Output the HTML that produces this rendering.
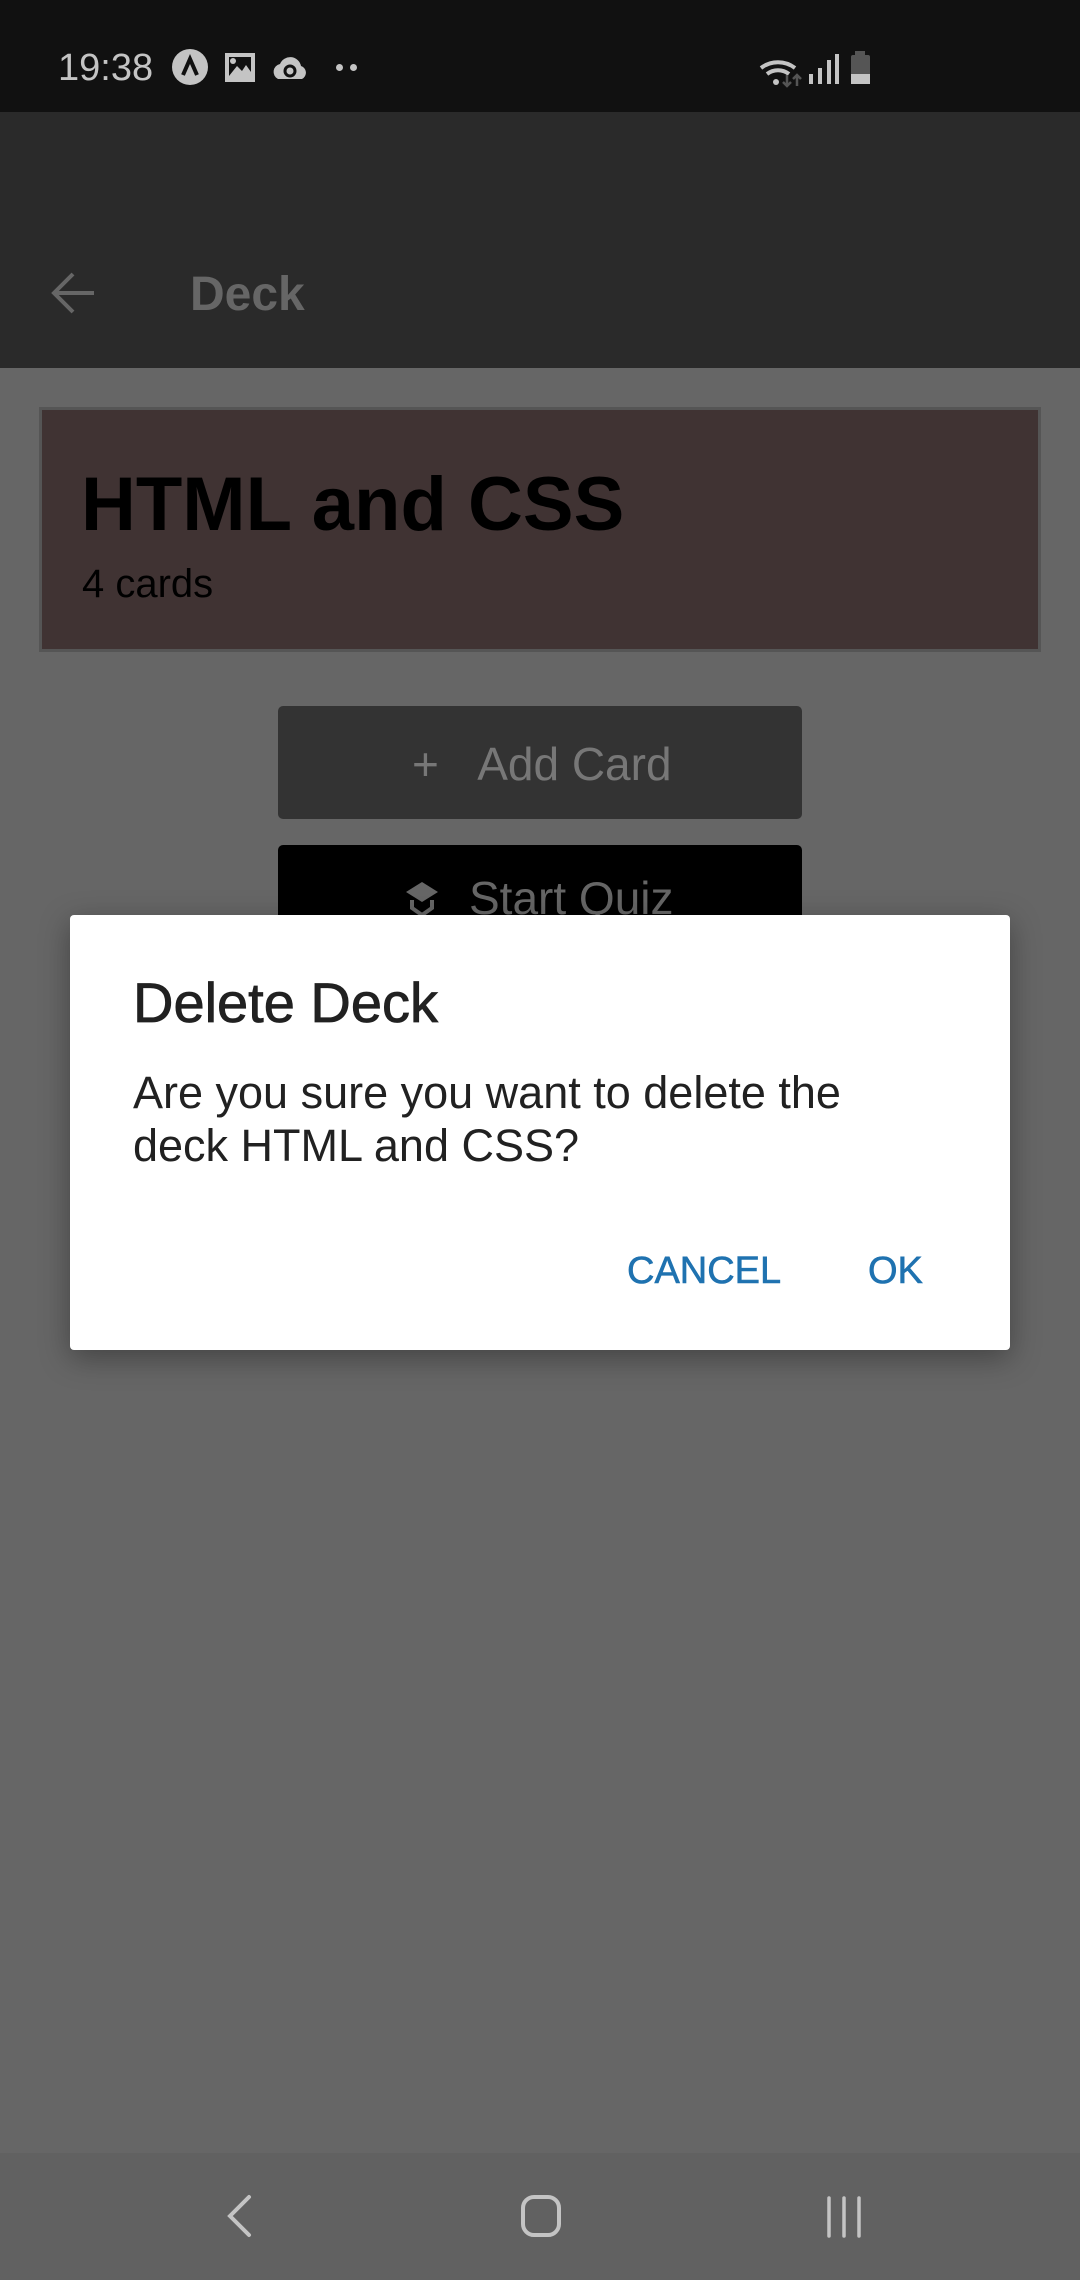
<!DOCTYPE html>
<html><head><meta charset="utf-8"><style>
*{margin:0;padding:0;box-sizing:border-box}
body{width:1080px;height:2280px;background:#666;position:relative;overflow:hidden;font-family:"Liberation Sans",Roboto,sans-serif}
.a{position:absolute}
</style></head><body>
<div class="a" style="left:0;top:0;width:1080px;height:112px;background:#111"></div>
<div class="a" style="left:58px;top:46px;font-size:38px;color:#c4c4c4;line-height:44px">19:38</div>
<svg class="a" style="left:168px;top:46px" width="150" height="42" viewBox="168 46 150 42">
<circle cx="190" cy="67" r="18" fill="#c4c4c4"/><path d="M183 75 L190 59 L197 75" stroke="#111" stroke-width="4" fill="none"/>
<rect x="225" y="53" width="30" height="29" fill="#c4c4c4"/><rect x="229" y="57" width="22" height="19" fill="#111"/>
<circle cx="233" cy="61" r="3" fill="#c4c4c4"/><path d="M229 76 L237 66 L242 71 L246 65 L251 72 L251 76Z" fill="#c4c4c4"/>
<path d="M278 79 a8 8 0 0 1 2-15 a11 11 0 0 1 21 2 a7 7 0 0 1 1 13Z" fill="#c4c4c4"/>
<circle cx="290" cy="71" r="5" stroke="#111" stroke-width="3" fill="none"/>
</svg>
<div class="a" style="left:336px;top:64px;width:7px;height:7px;border-radius:50%;background:#c4c4c4"></div>
<div class="a" style="left:350px;top:64px;width:7px;height:7px;border-radius:50%;background:#c4c4c4"></div>
<svg class="a" style="left:755px;top:48px" width="120" height="40" viewBox="755 48 120 40">
<path d="M761 68 a28 28 0 0 1 34 0" stroke="#c4c4c4" stroke-width="4" fill="none"/>
<path d="M767 74 a18 18 0 0 1 22 0" stroke="#c4c4c4" stroke-width="4" fill="none"/>
<circle cx="776" cy="82" r="3" fill="#c4c4c4"/>
<path d="M787 75v10M783 82l4 4 4-4M797 86v-10M793 79l4-4 4 4" stroke="#555" stroke-width="2.5" fill="none"/>
<rect x="809" y="74" width="4" height="10" fill="#c4c4c4"/><rect x="818" y="68" width="4" height="16" fill="#c4c4c4"/>
<rect x="827" y="60" width="4" height="24" fill="#c4c4c4"/><rect x="835" y="54" width="4" height="30" fill="#c4c4c4"/>
<rect x="855" y="51" width="10" height="4" fill="#555"/><rect x="851" y="55" width="19" height="29" rx="2" fill="#555"/>
<rect x="851" y="74" width="19" height="10" fill="#c4c4c4"/>
</svg>
<div class="a" style="left:0;top:112px;width:1080px;height:256px;background:#2a2a2a"></div>
<svg class="a" style="left:50px;top:270px" width="50" height="46" viewBox="0 0 50 46"><path d="M44 23H6M23 4L4 23l19 19" stroke="#666" stroke-width="4" fill="none"/></svg>
<div class="a" style="left:190px;top:267px;font-size:48px;font-weight:bold;color:#666;line-height:56px">Deck</div>
<div class="a" style="left:39px;top:407px;width:1002px;height:245px;background:#403333;border:3px solid #555"></div>
<div class="a" style="left:81px;top:460px;font-size:76px;font-weight:bold;color:#000;line-height:90px">HTML and CSS</div>
<div class="a" style="left:82px;top:561px;font-size:40px;color:#000;line-height:46px">4 cards</div>
<div class="a" style="left:278px;top:706px;width:524px;height:113px;background:#333;border-radius:5px"></div>
<div class="a" style="left:412px;top:736px;font-size:46px;color:#777;line-height:56px">+&nbsp;&nbsp;&nbsp;Add Card</div>
<div class="a" style="left:278px;top:845px;width:524px;height:113px;background:#000;border-radius:5px"></div>
<svg class="a" style="left:404px;top:880px" width="36" height="40" viewBox="0 0 36 40"><path d="M18 2L34 12L18 22L2 12Z" fill="#666"/><path d="M8 20v8l10 7 10-7v-8" stroke="#666" stroke-width="4" fill="none"/></svg>
<div class="a" style="left:469px;top:870px;font-size:46px;color:#666;line-height:56px">Start Quiz</div>
<div class="a" style="left:70px;top:915px;width:940px;height:435px;background:#fff;border-radius:4px;box-shadow:0 8px 30px rgba(0,0,0,.35)"></div>
<div class="a" style="left:133px;top:970px;font-size:56px;color:#212121;line-height:66px;-webkit-text-stroke:0.8px #212121">Delete Deck</div>
<div class="a" style="left:133px;top:1066px;font-size:45px;color:#212121;line-height:53px;width:860px">Are you sure you want to delete the<br>deck HTML and CSS?</div>
<div class="a" style="left:627px;top:1248px;font-size:38px;color:#1f72b0;line-height:46px;-webkit-text-stroke:0.6px #1f72b0">CANCEL</div>
<div class="a" style="left:868px;top:1248px;font-size:38px;color:#1f72b0;line-height:46px;-webkit-text-stroke:0.6px #1f72b0">OK</div>
<div class="a" style="left:0;top:2153px;width:1080px;height:127px;background:#616161"></div>
<svg class="a" style="left:0;top:2153px" width="1080" height="127" viewBox="0 2153 1080 127">
<path d="M249 2197L230 2216L249 2235" stroke="#c4c4c4" stroke-width="4" fill="none" stroke-linecap="round"/>
<rect x="523" y="2197" width="36" height="38" rx="11" stroke="#c4c4c4" stroke-width="4" fill="none"/>
<path d="M829 2198v38M844 2198v38M859 2198v38" stroke="#c4c4c4" stroke-width="3.5" stroke-linecap="round"/>
</svg>
</body></html>
